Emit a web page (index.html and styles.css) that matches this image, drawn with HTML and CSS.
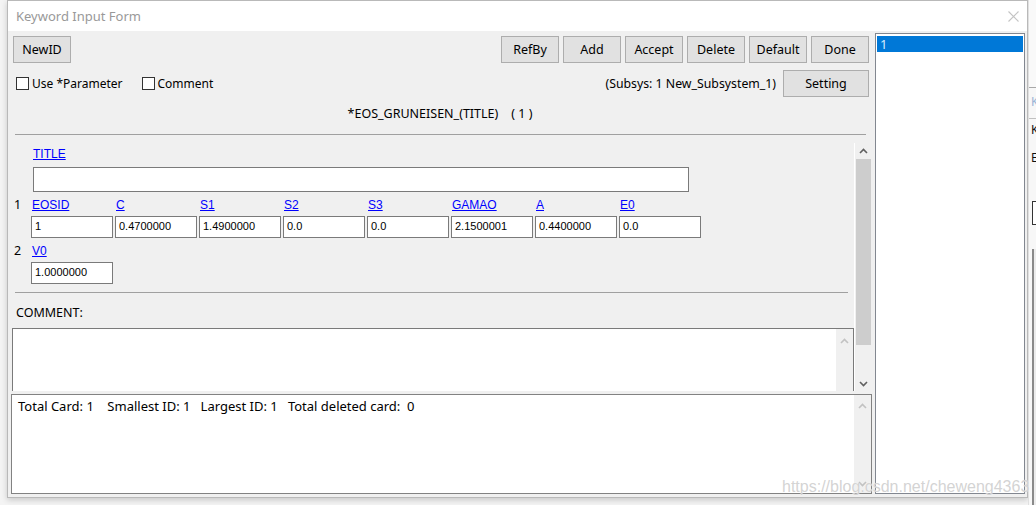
FILE: index.html
```html
<!DOCTYPE html>
<html>
<head>
<meta charset="utf-8">
<title>Keyword Input Form</title>
<link rel="stylesheet" href="styles.css">
</head>
<body>
<div class="desk">
  <div class="window">
    <div class="titlebar">
      <span class="title">Keyword Input Form</span>
      <svg class="close" width="11" height="11" viewBox="0 0 11 11"><path d="M0.5 0.5 L10.5 10.5 M10.5 0.5 L0.5 10.5" stroke="#c4c4c4" stroke-width="1.1" fill="none"/></svg>
    </div>
    <div class="client">
      <div class="main">
        <div class="toolbar">
          <button class="btn">NewID</button>
          <div class="btn-group">
            <button class="btn">RefBy</button>
            <button class="btn">Add</button>
            <button class="btn">Accept</button>
            <button class="btn">Delete</button>
            <button class="btn">Default</button>
            <button class="btn">Done</button>
          </div>
        </div>
        <div class="optrow">
          <label class="chk chk-param"><span class="box"></span>Use *Parameter</label>
          <label class="chk"><span class="box"></span>Comment</label>
          <span class="spacer"></span>
          <span class="subsys">(Subsys: 1 New_Subsystem_1)</span>
          <button class="btn btn-setting">Setting</button>
        </div>
        <div class="kwtitle">*EOS_GRUNEISEN_(TITLE)&nbsp;&nbsp;&nbsp;&nbsp;( 1 )</div>
        <div class="sep sep-top"></div>
        <div class="scrollarea">
          <div class="form">
            <div class="titlelabel"><span class="link">TITLE</span></div>
            <div class="titleinput"></div>
            <div class="cardrow">
              <div class="rownum">1</div>
              <div class="fields">
                <div class="field"><span class="link">EOSID</span><div class="inp">1</div></div>
                <div class="field"><span class="link">C</span><div class="inp">0.4700000</div></div>
                <div class="field"><span class="link">S1</span><div class="inp">1.4900000</div></div>
                <div class="field"><span class="link">S2</span><div class="inp">0.0</div></div>
                <div class="field"><span class="link">S3</span><div class="inp">0.0</div></div>
                <div class="field"><span class="link">GAMAO</span><div class="inp">2.1500001</div></div>
                <div class="field"><span class="link">A</span><div class="inp">0.4400000</div></div>
                <div class="field"><span class="link">E0</span><div class="inp">0.0</div></div>
              </div>
            </div>
            <div class="cardrow">
              <div class="rownum">2</div>
              <div class="fields">
                <div class="field"><span class="link">V0</span><div class="inp">1.0000000</div></div>
              </div>
            </div>
            <div class="sep sep-form"></div>
            <div class="commentlabel">COMMENT:</div>
            <div class="commentbox">
              <div class="cbody"></div>
              <div class="cscroll">
                <svg class="chev" width="9" height="6" viewBox="0 0 9 6"><polyline points="1,5 4.5,1.5 8,5" fill="none" stroke="#c2c2c2" stroke-width="1.6"/></svg>
              </div>
            </div>
          </div>
          <div class="vscroll">
            <svg class="chev" width="9" height="6" viewBox="0 0 9 6"><polyline points="1,5 4.5,1.5 8,5" fill="none" stroke="#606060" stroke-width="1.6"/></svg>
            <div class="thumb"></div>
            <div class="track"></div>
            <svg class="chev chev-down" width="9" height="6" viewBox="0 0 9 6"><polyline points="1,1 4.5,4.5 8,1" fill="none" stroke="#606060" stroke-width="1.6"/></svg>
          </div>
        </div>
        <div class="stats">
          <div class="stext">Total Card: 1    Smallest ID: 1   Largest ID: 1   Total deleted card:  0</div>
          <div class="sscroll">
            <svg class="chev" width="9" height="6" viewBox="0 0 9 6"><polyline points="1,5 4.5,1.5 8,5" fill="none" stroke="#c2c2c2" stroke-width="1.6"/></svg>
            <svg class="chev" width="9" height="6" viewBox="0 0 9 6"><polyline points="1,1 4.5,4.5 8,1" fill="none" stroke="#c2c2c2" stroke-width="1.6"/></svg>
          </div>
        </div>
      </div>
      <div class="listbox">
        <div class="item sel">1</div>
      </div>
    </div>
  </div>
  <div class="bgwin">
    <div class="bg-top"></div>
    <div class="bg-tab">K</div>
    <div class="bg-line">K</div>
    <div class="bg-line">E</div>
    <div class="bg-field"></div>
    <div class="bg-rest"></div>
  </div>
</div>
<div class="watermark">https://blog.csdn.net/cheweng4363</div>
</body>
</html>
```

FILE: styles.css
```css
* { box-sizing: border-box; }

html, body {
  margin: 0;
  padding: 0;
}

body {
  width: 1036px;
  height: 505px;
  overflow: hidden;
  background: #f4f4f4;
  font-family: "Noto Sans", "Liberation Sans", sans-serif;
  font-size: 12px;
  color: #000;
  position: relative;
}

.desk {
  display: flex;
  height: 505px;
}

.window {
  margin-left: 7px;
  width: 1021px;
  height: 498px;
  border: 1px solid #b9b9b9;
  background: #f0f0f0;
  display: flex;
  flex-direction: column;
  box-shadow: 0 2px 6px rgba(0, 0, 0, 0.18);
  flex-shrink: 0;
}

.titlebar {
  height: 30px;
  background: #ffffff;
  display: flex;
  align-items: center;
  justify-content: space-between;
  padding: 0 8px 0 8px;
}

.title {
  color: #999999;
  font-size: 13px;
  line-height: 30px;
}

.close {
  margin-top: 1px;
}

.client {
  flex: 1;
  display: flex;
  padding-right: 2px;
}

.main {
  width: 864px;
  display: flex;
  flex-direction: column;
}

.toolbar {
  display: flex;
  justify-content: space-between;
  padding: 5px 3px 0 5px;
}

.btn-group {
  display: flex;
  gap: 4px;
}

.btn {
  width: 58px;
  height: 27px;
  border: 1px solid #adadad;
  background: #e1e1e1;
  font-family: "Noto Sans", "Liberation Sans", sans-serif;
  font-size: 12.5px;
  color: #000;
  padding: 0;
  margin: 0;
  line-height: 24px;
}

.optrow {
  display: flex;
  align-items: center;
  height: 27px;
  margin-top: 7px;
  padding: 0 3px 0 8px;
}

.chk {
  display: flex;
  align-items: center;
  font-size: 12px;
}

.chk-param {
  margin-right: 19px;
}

.box {
  width: 13px;
  height: 13px;
  border: 1px solid #333333;
  background: #ffffff;
  margin-right: 3px;
}

.spacer { flex: 1; }

.subsys {
  font-size: 12.3px;
  margin-right: 7px;
}

.btn-setting {
  width: 86px;
}

.kwtitle {
  margin-top: 7px;
  height: 20px;
  line-height: 20px;
  text-align: center;
  font-size: 12.5px;
}

.sep {
  height: 1px;
  background: #a0a0a0;
}

.sep-top {
  margin: 10px 6px 0 7px;
}

.scrollarea {
  margin-top: 8px;
  height: 250px;
  display: flex;
}

.form {
  width: 847px;
  height: 248px;
  overflow: hidden;
  border-right: 1px solid #ffffff;
}

.titlelabel {
  margin-top: 4px;
  padding-left: 25px;
  height: 14px;
  line-height: 14px;
}

.link {
  color: #0000ff;
  text-decoration: underline;
  font-family: "Liberation Sans", sans-serif;
  font-size: 12px;
  line-height: 14px;
}

.titleinput {
  margin: 6px 0 0 25px;
  width: 656px;
  height: 25px;
  border: 1px solid #7a7a7a;
  background: #ffffff;
}

.cardrow {
  display: flex;
  margin-top: 5px;
  padding-left: 6px;
}

.rownum {
  width: 17px;
  height: 14px;
  line-height: 16px;
  font-size: 12.5px;
}

.fields {
  display: grid;
  grid-template-columns: repeat(8, 82px);
  column-gap: 2px;
}

.field {
  display: flex;
  flex-direction: column;
  align-items: flex-start;
}

.field .link {
  height: 14px;
  line-height: 16px;
  margin-left: 1px;
}

.inp {
  margin-top: 5px;
  width: 82px;
  height: 22px;
  border: 1px solid #7a7a7a;
  background: #ffffff;
  font-family: "Liberation Sans", sans-serif;
  font-size: 11px;
  line-height: 19px;
  padding-left: 3px;
}

.sep-form {
  margin: 8px 0 0 7px;
  width: 833px;
}

.commentlabel {
  margin-top: 12px;
  padding-left: 8px;
  height: 14px;
  line-height: 16px;
  font-size: 12.5px;
}

.commentbox {
  margin: 9px 0 0 4px;
  width: 842px;
  height: 80px;
  border: 1px solid #7a7a7a;
  background: #ffffff;
  display: flex;
}

.cbody { flex: 1; }

.cscroll {
  width: 17px;
  background: #f0f0f0;
  display: flex;
  flex-direction: column;
  align-items: center;
  padding-top: 9px;
}

.chev { display: block; }

.vscroll {
  width: 15px;
  margin-left: 1px;
  display: flex;
  flex-direction: column;
  align-items: center;
}

.vscroll > .chev {
  margin-top: 5px;
}

.thumb {
  margin-top: 5px;
  width: 15px;
  height: 186px;
  background: #cdcdcd;
}

.track { flex: 1; }

.vscroll > .chev-down {
  margin: 0 0 6px 0;
}

.stats {
  margin: 1px 0 0 3px;
  width: 861px;
  height: 100px;
  border: 1px solid #828282;
  background: #ffffff;
  display: flex;
}

.stext {
  flex: 1;
  white-space: pre;
  padding: 3px 0 0 6px;
  line-height: 16px;
  font-size: 13px;
}

.sscroll {
  width: 17px;
  background: #f0f0f0;
  display: flex;
  flex-direction: column;
  justify-content: space-between;
  align-items: center;
  padding: 8px 0 6px 0;
}

.listbox {
  margin: 2px 0 0 3px;
  width: 150px;
  height: 461px;
  border: 1px solid #828790;
  background: #ffffff;
  padding: 2px 1px;
}

.item {
  height: 16px;
  line-height: 16px;
  padding-left: 3px;
  font-size: 13px;
}

.sel {
  background: #0078d7;
  color: #d6ebff;
}

.bgwin {
  flex: 1;
  display: flex;
  flex-direction: column;
  background: #f7f7f7;
  font-size: 12px;
  overflow: hidden;
  border-left: 1px solid #e0e0e0;
}

.bg-top {
  height: 88px;
  border-bottom: 1px solid #a8a8a8;
  background: #f9f9f9;
}

.bg-tab {
  height: 31px;
  line-height: 28px;
  padding-left: 2px;
  color: #9bb3d6;
  border-bottom: 1px solid #c0c0c0;
}

.bg-line {
  height: 28px;
  line-height: 22px;
  padding-left: 2px;
  color: #111;
}

.bg-field {
  margin: 26px 0 0 3px;
  height: 24px;
  border: 1px solid #333;
  border-right: none;
  background: #ffffff;
}

.bg-rest {
  flex: 1;
  margin: 24px 0 0 3px;
  border-left: 2px solid #8a8a8a;
  background: #ececec;
}

.watermark {
  position: absolute;
  left: 782px;
  top: 478px;
  font-family: "Liberation Sans", sans-serif;
  font-size: 16px;
  color: rgba(200, 200, 200, 0.8);
  text-shadow: 0 0 1px #ffffff;
  white-space: nowrap;
}
```
